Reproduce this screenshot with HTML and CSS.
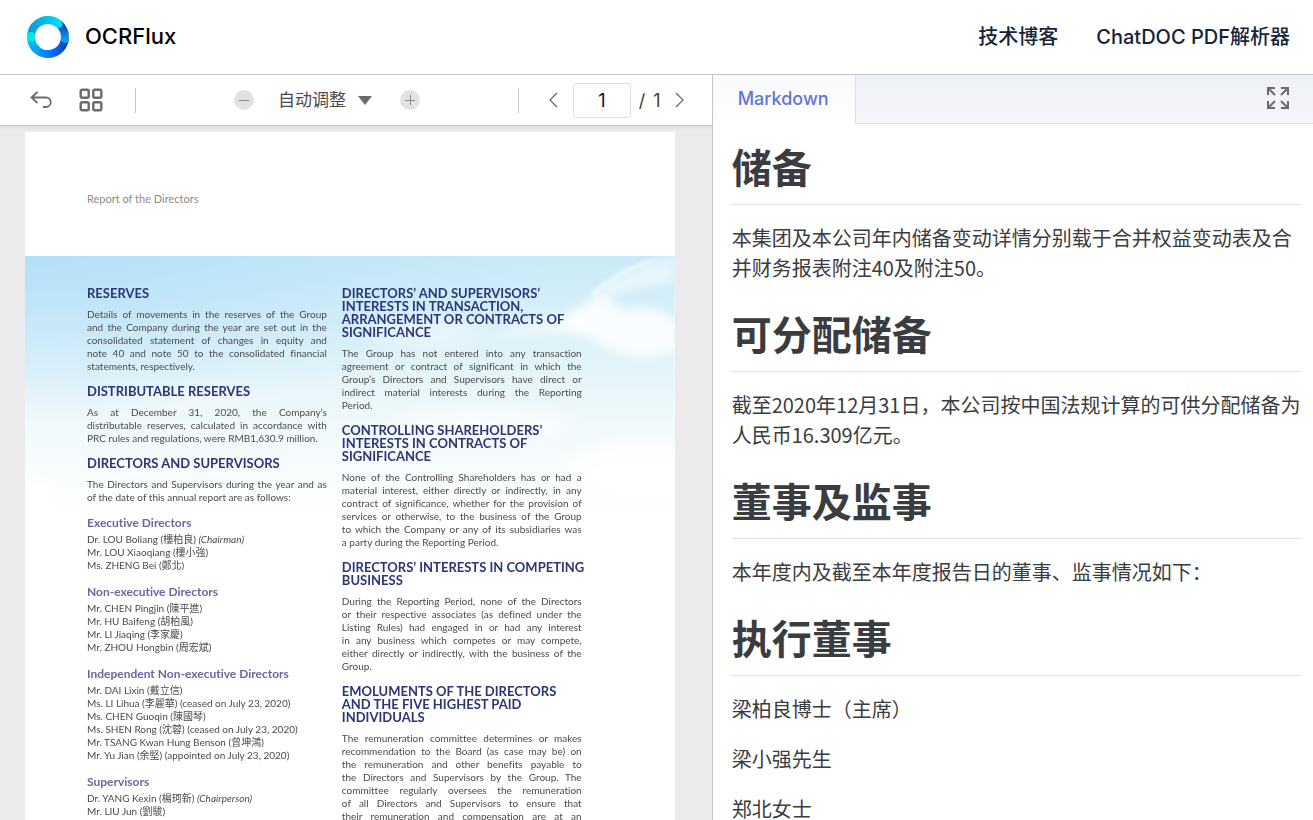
FILE: index.html
```html
<!DOCTYPE html>
<html lang="zh-CN">
<head>
  <meta charset="utf-8">
  <meta name="viewport" content="width=device-width, initial-scale=1">
  <title>OCRFlux</title>
  <link rel="stylesheet" href="styles.css">
</head>

<body>
  <header class="header">
    <a class="brand" href="#">
      <svg class="logo" viewBox="0 0 42 42" aria-hidden="true">
        <defs>
          <linearGradient id="top" x1="0" y1="0" x2="1" y2="0"><stop offset="0" stop-color="#0a9fd0"/><stop offset="1" stop-color="#00d8f5"/></linearGradient>
          <linearGradient id="right" x1="0" y1="0" x2="0" y2="1"><stop offset="0" stop-color="#0a45b8"/><stop offset="1" stop-color="#0a9cf0"/></linearGradient>
          <linearGradient id="bottom" x1="0" y1="0" x2="1" y2="0"><stop offset="0" stop-color="#0ba4ff"/><stop offset=".6" stop-color="#056bff"/><stop offset="1" stop-color="#0a48c0"/></linearGradient>
          <linearGradient id="left" x1="0" y1="0" x2="0" y2="1"><stop offset="0" stop-color="#00e4ee"/><stop offset="1" stop-color="#0aa4e8"/></linearGradient>
        </defs>
        <g fill="none" stroke-width="8" stroke-linecap="round">
          <path stroke="url(#bottom)" d="M37.7 24 A17 17 0 0 1 8 32"/>
          <path stroke="url(#left)" d="M8.500 32.500 A17 17 0 0 1 4 20"/>
          <path stroke="url(#right)" d="M33 9 A17 17 0 0 1 37.800 23"/>
          <path stroke="url(#top)" stroke-linecap="butt" d="M4.200 18 A17 17 0 0 1 31 7.300"/>
          <path stroke="#00d8f5" d="M30 7 L31.500 8"/>
          <path stroke="#00e4ee" d="M4.100 20 L4 21"/>
        </g>
      </svg>
      <span class="brand-name">OCRFlux</span>
    </a>
    <nav class="nav">
      <a class="nav-link" href="#">技术博客</a>
      <a class="nav-link" href="#">ChatDOC PDF解析器</a>
    </nav>
  </header>

  <main class="main">
    <section class="viewer">
      <div class="toolbar">
        <div class="tools">
          <button class="icon-button" type="button" aria-label="返回">
            <svg width="22" height="18" viewBox="0 0 22 18" fill="none" stroke="#6b6b6d" stroke-width="1.800"><path d="M7.500 1 L1.500 6.500 L7.500 12 M1.500 6.500 H16 A4.700 4.700 0 0 1 16 16 H13"/></svg>
          </button>
          <button class="icon-button" type="button" aria-label="缩略图">
            <svg width="24" height="24" viewBox="0 0 24 24" fill="none" stroke="#6b6b6d" stroke-width="2.400"><rect x="1.700" y="1.700" width="8" height="8" rx="1.500"/><rect x="14.300" y="1.700" width="8" height="8" rx="1.500"/><rect x="1.700" y="14.300" width="8" height="8" rx="1.500"/><rect x="14.300" y="14.300" width="8" height="8" rx="1.500"/></svg>
          </button>
          <span class="divider"></span>
        </div>
        <div class="zoom">
          <button class="round-button" type="button" aria-label="缩小">
            <svg width="20" height="20" viewBox="0 0 20 20" stroke="#8a8a8c"><path d="M5 10.500 H15"/></svg>
          </button>
          <button class="zoom-mode" type="button"><span class="zoom-label">自动调整</span>
            <svg width="14" height="9" viewBox="0 0 14 9" fill="#6b6b6d"><path d="M0 0 H14 L7 9 Z"/></svg>
          </button>
          <button class="round-button" type="button" aria-label="放大">
            <svg width="20" height="20" viewBox="0 0 20 20" stroke="#8a8a8c"><path d="M5 10.500 H15 M10.500 5 V15"/></svg>
          </button>
        </div>
        <div class="pager">
          <span class="divider"></span>
          <button class="icon-button" type="button" aria-label="上一页">
            <svg width="9" height="16" viewBox="0 0 9 16" fill="none" stroke="#6b6b6d" stroke-width="1.300"><path d="M8 1 L1 8 L8 15"/></svg>
          </button>
          <input class="page-input" type="text" value="1" aria-label="页码">
          <span class="page-total"><span>/</span> <span>1</span></span>
          <button class="icon-button" type="button" aria-label="下一页">
            <svg width="9" height="16" viewBox="0 0 9 16" fill="none" stroke="#6b6b6d" stroke-width="1.300"><path d="M1 1 L8 8 L1 15"/></svg>
          </button>
        </div>
      </div>

      <div class="pdf-scroll">
        <article class="pdf-page" lang="en">
          <p class="running-head">Report of the Directors</p>
          <div class="pdf-body">
            <svg class="sky" viewBox="0 0 650 260" preserveAspectRatio="none" aria-hidden="true">
              <defs>
                <linearGradient id="sky" x1="0" y1="0" x2="0" y2="1"><stop offset="0" stop-color="#c9eaf8"/><stop offset=".3" stop-color="#dcf1f8"/><stop offset=".65" stop-color="#f0f9fb"/><stop offset="1" stop-color="#fff"/></linearGradient>
                <radialGradient id="corner" cx="0" cy="0" r=".8"><stop offset="0" stop-color="#a4d9f8" stop-opacity=".6"/><stop offset="1" stop-color="#a4d9f8" stop-opacity="0"/></radialGradient>
                <filter id="soft" x="-30%" y="-60%" width="160%" height="220%"><feGaussianBlur stdDeviation="10"/></filter>
                <filter id="wisp" x="-30%" y="-30%" width="160%" height="160%"><feGaussianBlur stdDeviation="5"/></filter>
                <filter id="edge" x="-30%" y="-30%" width="160%" height="160%"><feGaussianBlur stdDeviation="1.500"/></filter>
              </defs>
              <rect width="650" height="260" fill="url(#sky)"/>
              <rect width="650" height="200" fill="url(#corner)"/>
              <g fill="#fff" filter="url(#soft)">
                <ellipse cx="400" cy="76" rx="60" ry="9" opacity=".6"/>
                <ellipse cx="170" cy="140" rx="60" ry="8" opacity=".4"/>
                <ellipse cx="460" cy="168" rx="90" ry="14" opacity=".7"/>
                <ellipse cx="5" cy="242" rx="25" ry="22"/>
                <ellipse cx="620" cy="215" rx="80" ry="30" opacity=".8"/>
              </g>
              <g fill="#fff" filter="url(#wisp)">
                <path opacity=".5" d="M565 40 Q600 10 650 0 V28 Q610 30 585 42 Z"/>
                <path opacity=".8" d="M535 70 Q550 52 572 40 Q585 42 600 54 Q630 46 655 66 V94 Q625 104 605 100 Q575 92 560 78 Z"/>
                <path opacity=".5" d="M460 82 Q520 60 570 48 L560 80 Q510 78 460 82 Z"/>
              </g>
              <path fill="none" stroke="#fff" stroke-width="3" opacity=".6" filter="url(#edge)" d="M568 38 Q595 14 630 4 M570 40 L584 46"/>
            </svg>

            <div class="pdf-column">
              <h2>RESERVES</h2>
              <p>Details of movements in the reserves of the Group<br>and the Company during the year are set out in the<br>consolidated statement of changes in equity and<br>note 40 and note 50 to the consolidated financial<span class="last">statements, respectively.</span></p>
              <h2>DISTRIBUTABLE RESERVES</h2>
              <p>As at December 31, 2020, the Company’s<br>distributable reserves, calculated in accordance with<span class="last">PRC rules and regulations, were RMB1,630.9 million.</span></p>
              <h2>DIRECTORS AND SUPERVISORS</h2>
              <p>The Directors and Supervisors during the year and as<span class="last">of the date of this annual report are as follows:</span></p>
              <h3>Executive Directors</h3>
              <ul>
                <li>Dr. LOU Boliang (樓柏良) <em>(Chairman)</em></li>
                <li>Mr. LOU Xiaoqiang (樓小強)</li>
                <li>Ms. ZHENG Bei (鄭北)</li>
              </ul>
              <h3>Non-executive Directors</h3>
              <ul>
                <li>Mr. CHEN Pingjin (陳平進)</li>
                <li>Mr. HU Baifeng (胡柏風)</li>
                <li>Mr. LI Jiaqing (李家慶)</li>
                <li>Mr. ZHOU Hongbin (周宏斌)</li>
              </ul>
              <h3>Independent Non-executive Directors</h3>
              <ul>
                <li>Mr. DAI Lixin (戴立信)</li>
                <li>Ms. LI Lihua (李麗華) (ceased on July 23, 2020)</li>
                <li>Ms. CHEN Guoqin (陳國琴)</li>
                <li>Ms. SHEN Rong (沈蓉) (ceased on July 23, 2020)</li>
                <li>Mr. TSANG Kwan Hung Benson (曾坤鴻)</li>
                <li>Mr. Yu Jian (余堅) (appointed on July 23, 2020)</li>
              </ul>
              <h3>Supervisors</h3>
              <ul>
                <li>Dr. YANG Kexin (楊珂新) <em>(Chairperson)</em></li>
                <li>Mr. LIU Jun (劉駿)</li>
                <li>(appointed on September 11, 2020)</li>
              </ul>
            </div>

            <div class="pdf-column">
              <h2>DIRECTORS’ AND SUPERVISORS’<br>INTERESTS IN TRANSACTION,<br>ARRANGEMENT OR CONTRACTS OF<br>SIGNIFICANCE</h2>
              <p>The Group has not entered into any transaction<br>agreement or contract of significant in which the<br>Group’s Directors and Supervisors have direct or<br>indirect material interests during the Reporting<span class="last">Period.</span></p>
              <h2>CONTROLLING SHAREHOLDERS’<br>INTERESTS IN CONTRACTS OF<br>SIGNIFICANCE</h2>
              <p>None of the Controlling Shareholders has or had a<br>material interest, either directly or indirectly, in any<br>contract of significance, whether for the provision of<br>services or otherwise, to the business of the Group<br>to which the Company or any of its subsidiaries was<span class="last">a party during the Reporting Period.</span></p>
              <h2>DIRECTORS’ INTERESTS IN COMPETING<br>BUSINESS</h2>
              <p>During the Reporting Period, none of the Directors<br>or their respective associates (as defined under the<br>Listing Rules) had engaged in or had any interest<br>in any business which competes or may compete,<br>either directly or indirectly, with the business of the<span class="last">Group.</span></p>
              <h2>EMOLUMENTS OF THE DIRECTORS<br>AND THE FIVE HIGHEST PAID<br>INDIVIDUALS</h2>
              <p>The remuneration committee determines or makes<br>recommendation to the Board (as case may be) on<br>the remuneration and other benefits payable to<br>the Directors and Supervisors by the Group. The<br>committee regularly oversees the remuneration<br>of all Directors and Supervisors to ensure that<br>their remuneration and compensation are at an</p>
            </div>
          </div>
        </article>
      </div>
    </section>

    <section class="result">
      <div class="tabs">
        <button class="tab" type="button">Markdown</button>
        <div class="tabs-rest">
          <button class="icon-button" type="button" aria-label="全屏">
            <svg width="22" height="22" viewBox="0 0 22 22" fill="none" stroke="#6b6b6d" stroke-width="2"><path d="M1 8 V1 H8 M1 1 L8 8 M14 1 H21 V8 M21 1 L14 8 M1 14 V21 H8 M1 21 L8 14 M21 14 V21 H14 M21 21 L14 14"/></svg>
          </button>
        </div>
      </div>
      <div class="markdown">
        <h1>储备</h1>
        <p>本集团及本公司年内储备变动详情分别载于合并权益变动表及合并财务报表附注40及附注50。</p>
        <h1>可分配储备</h1>
        <p>截至2020年12月31日，本公司按中国法规计算的可供分配储备为人民币16.309亿元。</p>
        <h1>董事及监事</h1>
        <p>本年度内及截至本年度报告日的董事、监事情况如下：</p>
        <h1>执行董事</h1>
        <p>梁柏良博士（主席）</p>
        <p>梁小强先生</p>
        <p>郑北女士</p>
      </div>
    </section>
  </main>
</body>
</html>
```
FILE: styles.css
```css
* {
  box-sizing: border-box;
}

body {
  display: flex;
  flex-direction: column;
  margin: 0;
  height: 100vh;
  overflow: hidden;
  background-color: white;
  color: #3b3c40;
  font-family: Inter, "Noto Sans CJK SC", sans-serif;
}

h1, h2, h3, p, ul {
  margin: 0;
}

button {
  padding: 0;
  border: 0;
  background: none;
  color: inherit;
  font-family: inherit;
  cursor: pointer;
}

svg {
  display: block;
}

/* header */

.header {
  display: flex;
  flex: none;
  justify-content: space-between;
  align-items: center;
  height: 75px;
  padding: 0 23px 0 27px;
  border-bottom: 1px solid #c4c4c6;
}

.brand {
  display: flex;
  align-items: center;
  gap: 16px;
  color: black;
  text-decoration: none;
}

.logo {
  width: 42px;
  height: 42px;
}

.brand-name {
  padding-bottom: 2px;
  font-size: 22px;
  font-weight: 500;
}

.nav {
  display: flex;
  gap: 38px;
  padding-bottom: 4px;
}

.nav-link {
  color: #17233a;
  font-size: 20px;
  font-weight: 500;
  text-decoration: none;
}

/* layout */

.main {
  display: flex;
  flex: 1;
  min-height: 0;
}

.viewer {
  display: flex;
  flex: none;
  flex-direction: column;
  width: 54.2%;
}

/* pdf toolbar */

.toolbar {
  display: flex;
  flex: none;
  justify-content: space-between;
  align-items: center;
  height: 51px;
  padding: 0 28px 0 30px;
  border-bottom: 1px solid #c4c4c6;
}

.tools,
.zoom,
.pager {
  display: flex;
  align-items: center;
}

.tools {
  gap: 27px;
}

.tools .divider {
  margin-left: 5px;
}

.divider {
  width: 1px;
  height: 25px;
  background-color: #c4c4c6;
}

.zoom {
  gap: 24px;
}

.round-button {
  border-radius: 50%;
  background-color: #e2e2e2;
}

.zoom-mode {
  display: flex;
  align-items: center;
  gap: 12px;
  padding-right: 4px;
  color: #4a4a4c;
}

.zoom-label {
  padding-bottom: 4px;
  font-size: 17px;
}

.page-input {
  width: 58px;
  height: 35px;
  margin: 0 8px 0 15px;
  border: 1px solid #dcdfe8;
  border-radius: 4px;
  color: #111;
  font-family: inherit;
  font-size: 18px;
  text-align: center;
}

.pager .divider {
  margin-right: 30px;
}

.page-total {
  display: flex;
  gap: 8px;
  margin-right: 14px;
  font-size: 18px;
}

/* pdf page */

.pdf-scroll {
  flex: 1;
  padding: 6px 37px 0 25px;
  overflow: hidden;
  background: linear-gradient(#dedee0, #ebebed 4px);
}

.pdf-page {
  background-color: white;
  color: #4b4b4d;
  font-family: Lato, "Noto Sans CJK TC", sans-serif;
  font-size: 10px;
  font-variant-ligatures: none;
  line-height: 13px;
}

.running-head {
  height: 124px;
  padding: 60px 62px 0;
  color: #8b8b8d;
  font-size: 11px;
}

.pdf-body {
  display: flex;
  position: relative;
  gap: 15px;
  padding: 31px 93px 0 62px;
}

.sky {
  position: absolute;
  top: 0;
  left: 0;
  width: 100%;
  height: 260px;
}

.pdf-column {
  position: relative;
  flex: 1;
  min-width: 0;
  white-space: nowrap;
}

.pdf-column h2 {
  margin-bottom: 8px;
  color: #2c3577;
  font-size: 13px;
  line-height: 13px;
}

.pdf-column p {
  margin-bottom: 12px;
  text-align: justify;
  text-align-last: justify;
}

.last {
  display: block;
  text-align-last: left;
}

.pdf-column h3 {
  margin-bottom: 4px;
  color: #6f659e;
  font-size: 12px;
  line-height: 13px;
}

.pdf-column ul {
  margin-bottom: 13px;
  padding: 0;
  list-style: none;
}

/* result */

.result {
  flex: 1;
  min-width: 0;
  border-left: 1px solid #c4c4c6;
}

.tabs {
  display: flex;
  height: 49px;
}

.tab {
  padding: 0 26px 2px 25px;
  background: linear-gradient(#f8f9fb, white);
  color: #6275db;
  font-size: 18px;
  font-weight: 500;
}

.tabs-rest {
  display: flex;
  flex: 1;
  justify-content: flex-end;
  align-items: center;
  padding: 0 24px 2px 0;
  border-bottom: 1px solid #dcdfe8;
  border-left: 1px solid #dcdfe8;
  background: linear-gradient(#eef1f5, #f4f6fb);
}

.markdown {
  padding: 17px 11px 0 19px;
  font-family: "Noto Sans CJK SC", sans-serif;
  font-size: 20px;
  line-height: 30px;
}

.markdown h1 {
  margin: 25px 0 18px;
  padding-bottom: 13px;
  border-bottom: 1px solid #e2e2e4;
  font-size: 40px;
  line-height: 50px;
}

.markdown h1:first-child {
  margin-top: 0;
}

.markdown p {
  margin-bottom: 20px;
}
```
